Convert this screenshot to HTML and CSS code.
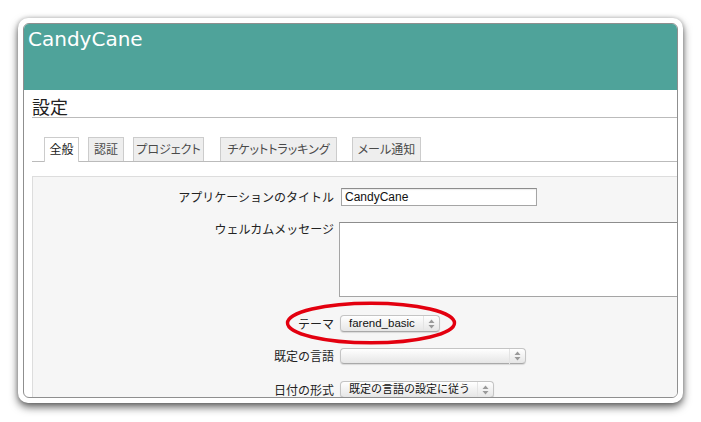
FILE: index.html
```html
<!DOCTYPE html>
<html lang="ja">
<head>
<meta charset="utf-8">
<title>CandyCane 設定</title>
<link rel="stylesheet" href="styles.css">
</head>
<body>
<div class="frame">
  <div class="window">
    <header class="top"><h1 class="brand">CandyCane</h1></header>
    <main class="main">
      <h2 class="page-title">設定</h2>
      <ul class="tabs">
        <li class="tab active tab-general">全般</li>
        <li class="tab tab-auth">認証</li>
        <li class="tab tab-project">プロジェクト</li>
        <li class="tab tab-tracking">チケットトラッキング</li>
        <li class="tab tab-mail">メール通知</li>
      </ul>
      <div class="box">
        <div class="row">
          <label class="label">アプリケーションのタイトル</label>
          <input class="text" type="text" value="CandyCane">
        </div>
        <div class="row row-top">
          <label class="label">ウェルカムメッセージ</label>
          <textarea class="area"></textarea>
        </div>
        <div class="row row-theme">
          <label class="label">テーマ</label>
          <span class="select select-theme"><span class="select-text">farend_basic</span><span class="arrows"><svg width="7" height="10" viewBox="0 0 7 10"><path d="M3.5 0.5 L6.5 4 L0.5 4 Z M3.5 9.5 L6.5 6 L0.5 6 Z" fill="#9a9a9a"/></svg></span></span>
          <svg class="circle" width="172" height="44" viewBox="0 0 172 44"><ellipse cx="86" cy="22" rx="83.5" ry="19.8" fill="none" stroke="#e3000f" stroke-width="3.4"/></svg>
        </div>
        <div class="row">
          <label class="label">既定の言語</label>
          <span class="select select-lang"><span class="select-text"></span><span class="arrows"><svg width="7" height="10" viewBox="0 0 7 10"><path d="M3.5 0.5 L6.5 4 L0.5 4 Z M3.5 9.5 L6.5 6 L0.5 6 Z" fill="#9a9a9a"/></svg></span></span>
        </div>
        <div class="row row-date">
          <label class="label">日付の形式</label>
          <span class="select select-date"><span class="select-text">既定の言語の設定に従う</span><span class="arrows"><svg width="7" height="10" viewBox="0 0 7 10"><path d="M3.5 0.5 L6.5 4 L0.5 4 Z M3.5 9.5 L6.5 6 L0.5 6 Z" fill="#9a9a9a"/></svg></span></span>
        </div>
      </div>
    </main>
  </div>
</div>
</body>
</html>
```

FILE: styles.css
```css
html, body {
  margin: 0;
  padding: 0;
  background: #ffffff;
}
body {
  padding: 18px;
  font-family: "Noto Sans CJK JP", "DejaVu Sans", sans-serif;
  color: #333;
}
.frame {
  width: 665px;
  height: 385px;
  box-sizing: border-box;
  padding: 5px;
  background: #fff;
  border-radius: 10px;
  box-shadow: 0 4px 9px rgba(0, 0, 0, 0.62), 0 0 4px rgba(0, 0, 0, 0.2);
}
.window {
  height: 100%;
  box-sizing: border-box;
  border: 1px solid #8f8f8f;
  border-radius: 6px;
  overflow: hidden;
  background: #fff;
}
.top {
  height: 66px;
  background: #4fa39a;
  padding: 3px 0 0 4px;
  box-sizing: border-box;
}
.brand {
  margin: 0;
  font-family: "DejaVu Sans", sans-serif;
  font-weight: normal;
  font-size: 20px;
  line-height: 24px;
  color: #fff;
}
.main {
  padding-left: 8px;
}
.page-title {
  margin: 5px 0 0 0;
  font-family: "Noto Sans CJK JP", sans-serif;
  font-weight: normal;
  font-size: 18px;
  line-height: 22px;
  color: #222;
  border-bottom: 1px solid #bbbbbb;
}
.tabs {
  list-style: none;
  margin: 19px 0 0 0;
  padding: 0 0 0 12px;
  display: flex;
  border-bottom: 1px solid #bbbbbb;
  height: 24px;
}
.tab {
  box-sizing: border-box;
  height: 24px;
  border: 1px solid #cccccc;
  border-bottom: none;
  background: #eeeeee;
  color: #4a4a4a;
  font-size: 12px;
  font-feature-settings: "palt";
  line-height: 22px;
  text-align: center;
  margin-right: 9px;
  white-space: nowrap;
}
.tab.active {
  background: #fff;
  color: #222;
  height: 25px;
  margin-bottom: -1px;
}
.tab-general { width: 35px; }
.tab-auth { width: 36px; }
.tab-project { width: 71px; margin-right: 16px; }
.tab-tracking { width: 117px; margin-right: 15px; }
.tab-mail { width: 69px; }
.box {
  margin-top: 14px;
  margin-right: -2px;
  border: 1px solid #dddddd;
  background: #f6f6f6;
  padding-top: 11px;
  height: 260px;
  display: flex;
  flex-direction: column;
  gap: 16px;
}
.row {
  display: flex;
  align-items: center;
  position: relative;
}
.row-top {
  align-items: flex-start;
}
.row-theme {
  margin-top: 2px;
}
.row-date {
  margin-top: 1px;
}
.label {
  width: 301px;
  margin-right: 6px;
  flex: none;
  text-align: right;
  font-size: 12px;
  line-height: 14px;
  color: #222;
}
.text {
  box-sizing: border-box;
  width: 196px;
  height: 18px;
  margin: 0 0 0 1px;
  padding: 0 3px;
  border: 1px solid #a5a5a5;
  border-top-color: #8d8d8d;
  background: #fff;
  font-family: "Liberation Sans", sans-serif;
  font-size: 12px;
  color: #111;
  box-shadow: inset 0 1px 1px rgba(0, 0, 0, 0.08);
}
.area {
  box-sizing: border-box;
  width: 345px;
  height: 75px;
  margin: 0 0 0 -1px;
  padding: 0;
  border: 1px solid #a5a5a5;
  border-top-color: #8d8d8d;
  background: #fff;
  resize: none;
  flex: none;
}
.select {
  box-sizing: border-box;
  display: flex;
  align-items: center;
  height: 17px;
  border: 1px solid #c4c4c4;
  border-bottom-color: #a9a9a9;
  border-radius: 4px;
  background: linear-gradient(#ffffff, #f2f2f2 50%, #e6e6e6);
  box-shadow: 0 1px 1px rgba(0, 0, 0, 0.12);
  font-family: "Liberation Sans", "Noto Sans CJK JP", sans-serif;
  font-size: 11.5px;
  color: #111;
  flex: none;
}
.select-text {
  flex: 1;
  padding-left: 8px;
  line-height: 15px;
  white-space: nowrap;
  overflow: hidden;
}
.arrows {
  width: 15px;
  height: 15px;
  display: flex;
  align-items: center;
  justify-content: center;
  border-left: 1px solid #e4e4e4;
}
.arrows svg {
  display: block;
}
.select-theme { width: 100px; }
.select-lang { width: 186px; height: 16px; }
.select-date { width: 154px; }
.select-date .select-text {
  font-size: 11px;
}
.circle {
  position: absolute;
  left: 252px;
  top: -14px;
  pointer-events: none;
}
```
